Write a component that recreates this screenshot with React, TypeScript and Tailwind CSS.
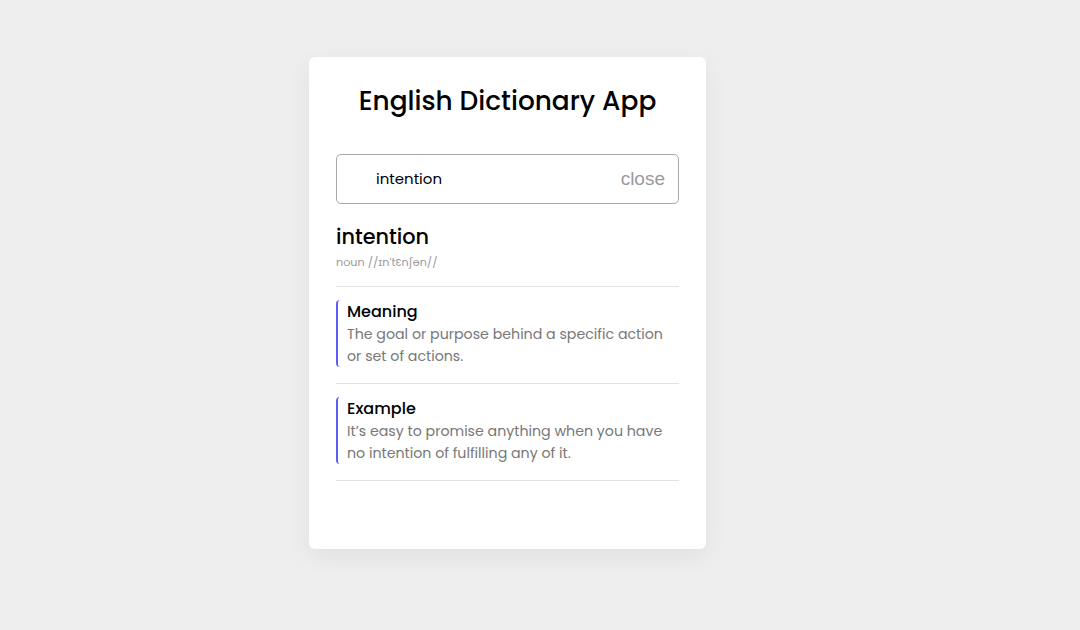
import React from 'react'

const sections = [
  {
    title: 'Meaning',
    text: 'The goal or purpose behind a specific action or set of actions.',
  },
  {
    title: 'Example',
    text: 'It’s easy to promise anything when you have no intention of fulfilling any of it.',
  },
]

export default function App() {
  return (
    <div className="min-h-screen w-full bg-[#eeeeee] pt-[57px] pl-[309px] font-['Poppins','Inter',sans-serif]">
      <div className="w-[397px] h-[492px] bg-white rounded-md shadow-[0_8px_24px_rgba(0,0,0,0.06)] px-[27px] pt-[26px]">
        <h1 className="text-center text-[26.4px] font-medium text-black leading-[36px]">
          English Dictionary App
        </h1>

        {/* Search box */}
        <div className="mt-[35px] h-[50px] flex items-center border border-[#a8a8a8] rounded-[5px] pl-[39px] pr-[13px]">
          <input
            className="flex-1 min-w-0 outline-none text-[15px] text-black bg-transparent"
            defaultValue="intention"
          />
          <span className="font-['Liberation_Sans',sans-serif] text-[19px] text-[#9a9a9a]">close</span>
        </div>

        {/* Word header */}
        <div className="mt-[19px] pb-[16px] border-b border-[#e2e2e2]">
          <div className="text-[20.8px] font-medium text-black leading-[28px]">intention</div>
          <div className="text-[11.2px] text-[#9a9a9a] leading-[16px] mt-[3px]">noun //ɪnˈtɛnʃən//</div>
        </div>

        {sections.map((s) => (
          <div key={s.title} className="pt-[13px] pb-[16px] border-b border-[#e2e2e2]">
            <div className="border-l-2 border-[#5b5ef5] rounded-sm pl-[9px]">
              <div className="text-[16px] font-medium text-black leading-[24px]">{s.title}</div>
              <p className="text-[14.2px] text-[#777777] leading-[21.6px]">{s.text}</p>
            </div>
          </div>
        ))}
      </div>
    </div>
  )
}
